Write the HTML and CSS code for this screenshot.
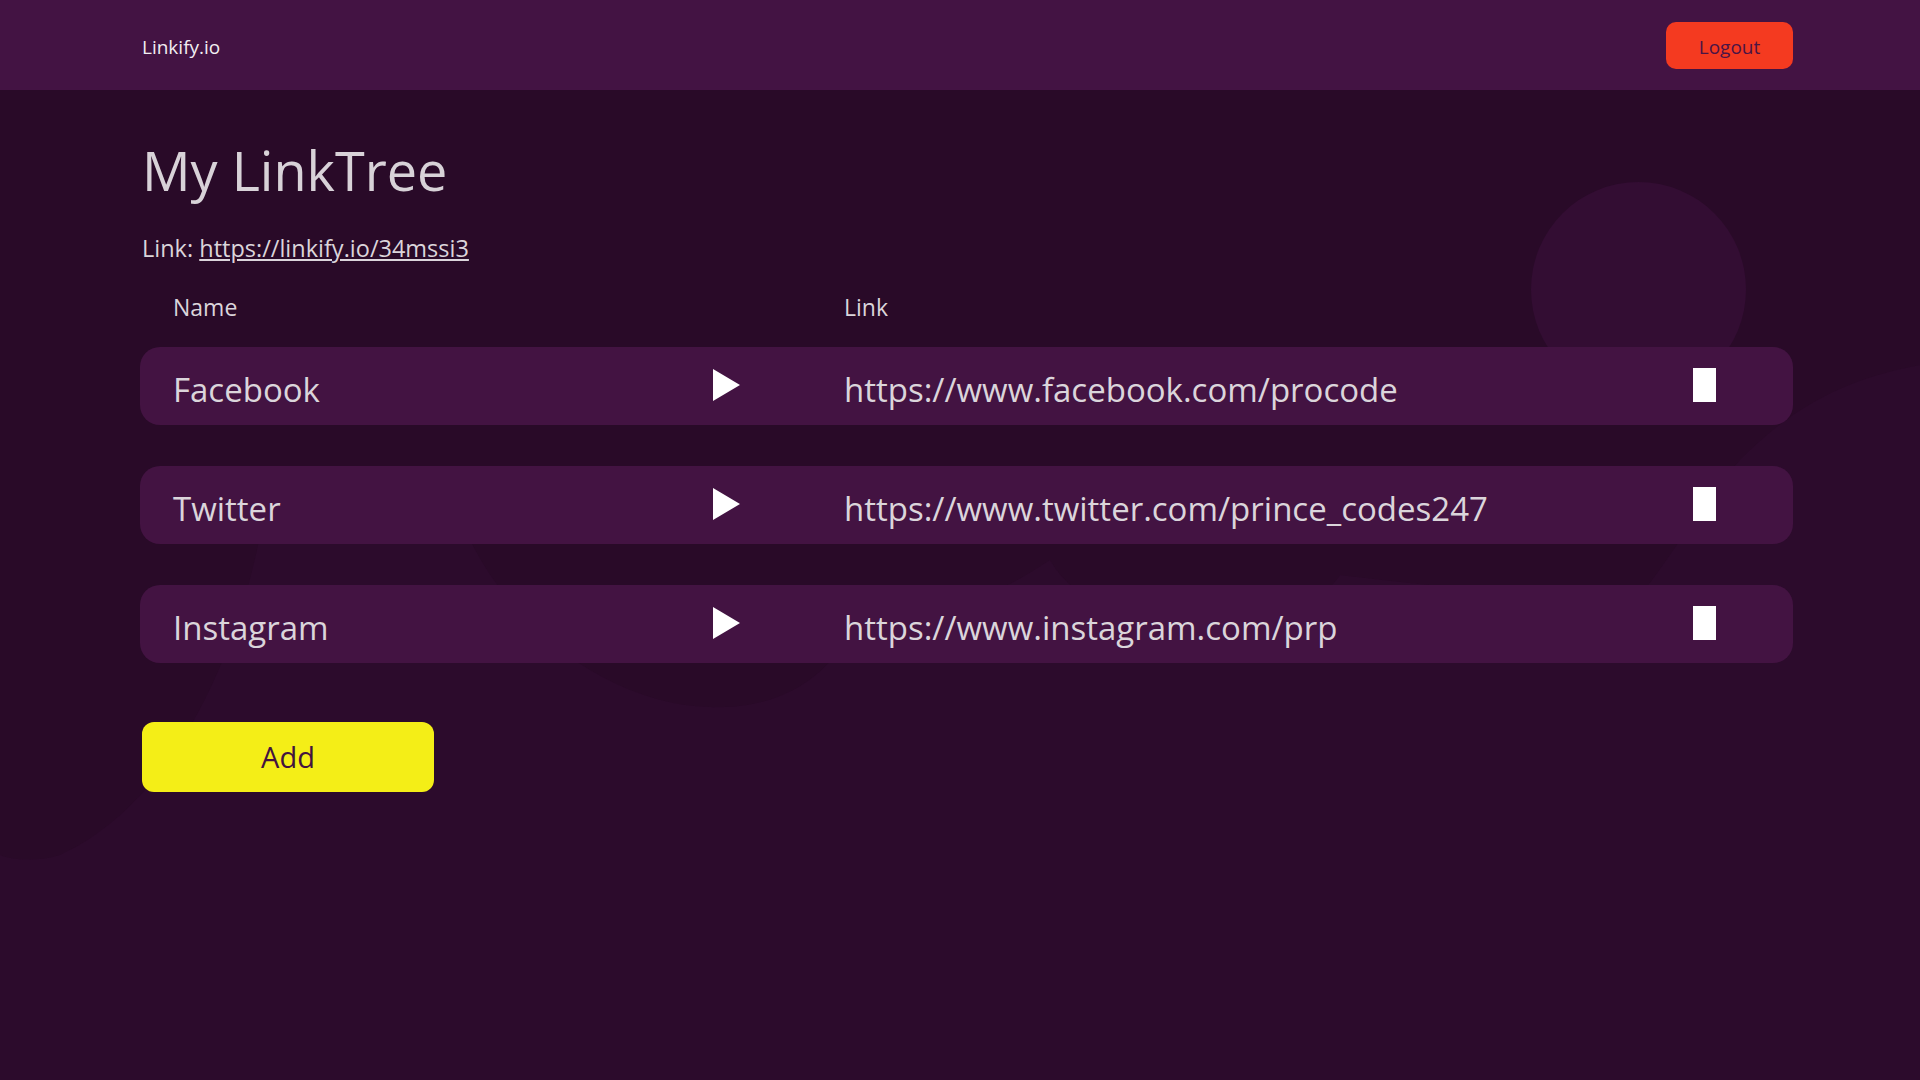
FILE: index.html
```html
<!DOCTYPE html>
<html lang="en">
<head>
<meta charset="utf-8">
<title>Linkify.io</title>
<link rel="stylesheet" href="styles.css">
</head>
<body>
<div class="backdrop" aria-hidden="true">
  <svg class="blob" width="1920" height="1080" viewBox="0 0 1920 1080">
    <path d="M0,90 H1920 V365 C1840,380 1790,410 1740,460 C1700,505 1670,560 1640,595 C1560,600 1420,585 1340,575 C1300,640 1100,650 1050,560 C990,600 900,640 860,600 C840,690 760,710 710,707 C620,705 520,640 470,540 L260,535 C240,640 180,800 60,855 C40,862 10,860 0,855 Z" />
  </svg>
  <div class="bubble"></div>
</div>

<header class="topbar">
  <div class="brand">Linkify.io</div>
  <button class="btn-logout">Logout</button>
</header>

<main class="page">
  <h1 class="title">My LinkTree</h1>
  <p class="share">Link: <a href="#">https://linkify.io/34mssi3</a></p>

  <div class="table">
    <div class="thead">
      <span class="col-name">Name</span>
      <span class="col-play"></span>
      <span class="col-link">Link</span>
    </div>

    <div class="row">
      <span class="col-name">Facebook</span>
      <span class="col-play"><span class="play"></span></span>
      <span class="col-link">https://www.facebook.com/procode</span>
      <span class="col-del"><span class="del"></span></span>
    </div>
    <div class="row">
      <span class="col-name">Twitter</span>
      <span class="col-play"><span class="play"></span></span>
      <span class="col-link">https://www.twitter.com/prince_codes247</span>
      <span class="col-del"><span class="del"></span></span>
    </div>
    <div class="row">
      <span class="col-name">Instagram</span>
      <span class="col-play"><span class="play"></span></span>
      <span class="col-link">https://www.instagram.com/prp</span>
      <span class="col-del"><span class="del"></span></span>
    </div>
  </div>

  <button class="btn-add">Add</button>
</main>
</body>
</html>
```

FILE: styles.css
```css
* { box-sizing: border-box; }

html, body {
  margin: 0;
  padding: 0;
}

body {
  width: 1920px;
  min-height: 1080px;
  background: #2c0b2c;
  color: #dbd5db;
  font-family: "Open Sans", "Noto Sans", sans-serif;
  position: relative;
  overflow: hidden;
}

.backdrop {
  position: absolute;
  inset: 0;
  z-index: 0;
  pointer-events: none;
}

.blob {
  position: absolute;
  left: 0;
  top: 0;
}
.blob path { fill: #290a28; }

.bubble {
  position: absolute;
  left: 1531px;
  top: 182px;
  width: 215px;
  height: 215px;
  border-radius: 50%;
  background: #330d33;
}

.topbar {
  position: relative;
  z-index: 1;
  height: 90px;
  background: #431343;
  display: flex;
  align-items: center;
  justify-content: space-between;
  padding: 0 127px 0 142px;
}

.brand {
  font-size: 19px;
  color: #f2eef2;
  line-height: 1;
  margin-top: 4px;
}

.btn-logout {
  width: 127px;
  height: 47px;
  border: none;
  border-radius: 10px;
  background: #f43a20;
  color: #4a1446;
  font-family: "Open Sans", sans-serif;
  font-size: 19px;
  padding: 2px 0 0;
  margin-top: 1px;
}

.page {
  position: relative;
  z-index: 1;
  padding: 0 127px 0 140px;
}

.title {
  margin: 53px 0 0 2px;
  font-size: 54px;
  font-weight: 400;
  line-height: 1;
  color: #d8d2d8;
}

.share {
  margin: 40px 0 0 2px;
  font-size: 23.5px;
  line-height: 1;
}
.share a { color: #dbd5db; }

.table {
  margin-top: 35px;
  display: flex;
  flex-direction: column;
  gap: 41px;
}

.thead, .row {
  display: grid;
  grid-template-columns: 540px 131px 849px 23px 1fr;
  align-items: center;
  padding-left: 33px;
}

.thead {
  font-size: 23px;
  line-height: 1;
  margin-bottom: -13px;
}

.row {
  height: 78px;
  background: #431342;
  border-radius: 20px;
  font-size: 33px;
  line-height: 1;
}
.row .col-name, .row .col-link { padding-top: 7px; }

.col-play, .col-del { display: flex; align-items: center; }

.play {
  width: 0;
  height: 0;
  border-top: 16.5px solid transparent;
  border-bottom: 16.5px solid transparent;
  border-left: 27px solid #ffffff;
  margin-top: -1px;
}

.del {
  width: 23px;
  height: 34px;
  background: #ffffff;
  margin-top: -1px;
}

.btn-add {
  margin: 59px 0 0 2px;
  width: 292px;
  height: 70px;
  border: none;
  border-radius: 12px;
  background: #f4ee17;
  color: #43133f;
  font-family: "Open Sans", sans-serif;
  font-size: 29px;
  padding: 0;
}
```
